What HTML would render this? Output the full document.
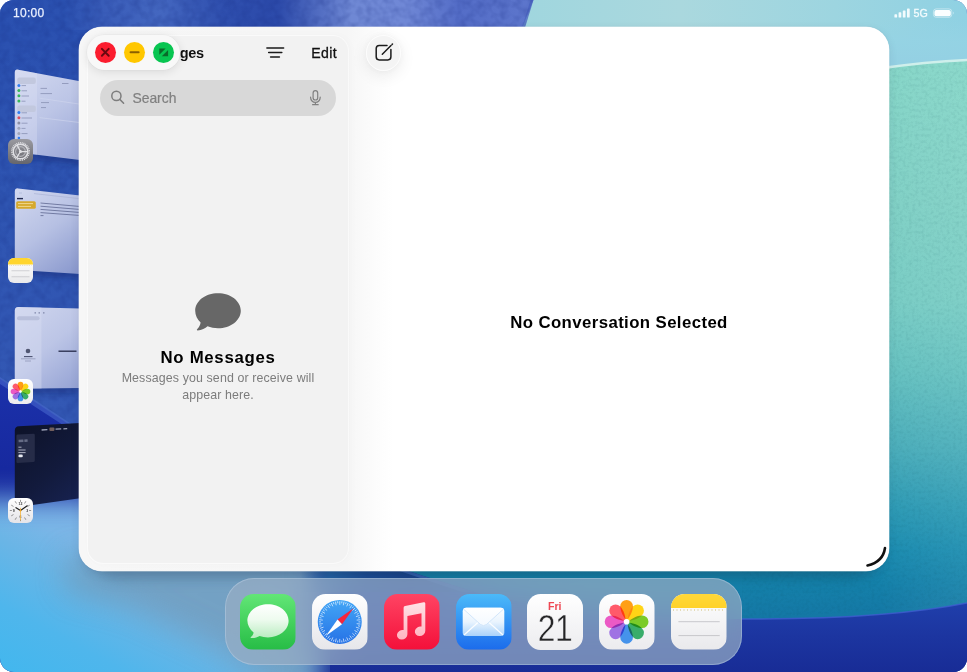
<!DOCTYPE html>
<html lang="en">
<head>
<meta charset="utf-8">
<title>Messages</title>
<style>
html,body{margin:0;padding:0;background:#fff;}
body{width:967px;height:672px;overflow:hidden;position:relative;font-family:"Liberation Sans",sans-serif;}
#screen{position:absolute;left:0;top:0;width:967px;height:672px;border-radius:14px;overflow:hidden;background:transparent;}
#wall{position:absolute;left:0;top:0;width:967px;height:672px;display:block;}
.abs{position:absolute;}
/* status bar */
#time{will-change:transform;position:absolute;left:13.3px;top:6px;font-size:12px;line-height:14px;color:#eaf0ff;-webkit-text-stroke:0.25px #eaf0ff;letter-spacing:0.3px;}
#status{position:absolute;left:890px;top:4px;width:70px;height:18px;}
/* window */
#win{position:absolute;left:79px;top:26.6px;width:810px;height:544.2px;border-radius:23px;background:#fff;
 box-shadow:0 0 0 0.5px rgba(255,255,255,.6), 0 3px 10px rgba(40,40,70,.10), 0 0 2px rgba(40,40,70,.10);}
#winshadow{position:absolute;left:92px;top:526px;width:786px;height:52px;border-radius:26px;background:rgba(5,30,55,.22);filter:blur(7px);}
#winclip{position:absolute;inset:0;will-change:transform;border-radius:23px;overflow:hidden;
 background:linear-gradient(90deg,#f7f7f7 0,#f6f6f6 200px,#f6f6f6 269px,#f7f7f7 272px,#f9f9f9 282px,#fcfcfc 296px,#fff 314px);}
#side{position:absolute;left:8.8px;top:9.2px;width:260.2px;height:527px;border-radius:15px;background:#f2f2f2;
 box-shadow:0 0 0 1px rgba(255,255,255,.5), 2px 0 10px rgba(0,0,0,.025);}
#lights{position:absolute;left:8px;top:8px;width:93px;height:35px;border-radius:18px;background:#f8f8f8;
 box-shadow:0 2px 10px rgba(0,0,0,.10),0 0 0 0.5px rgba(0,0,0,.03);}
.tl{position:absolute;top:7px;width:21px;height:21px;border-radius:50%;}
#title{clip-path:inset(-2px -2px -4px 43.2px);position:absolute;left:58.1px;top:17px;font-weight:bold;font-size:14.5px;line-height:18px;color:#111;letter-spacing:-0.35px;}
#edit{position:absolute;left:232.3px;top:17.3px;letter-spacing:0.4px;font-size:14.1px;line-height:18px;color:#111;-webkit-text-stroke:0.3px #111;}
#search{position:absolute;left:21px;top:53px;width:236px;height:35.8px;border-radius:18px;background:#d8d8d8;}
#search span{position:absolute;left:32.4px;top:8.5px;font-size:13.9px;line-height:18px;color:#808080;-webkit-text-stroke:0.2px #808080;}
#nomsg{position:absolute;left:9px;top:321px;width:260px;text-align:center;font-weight:bold;font-size:16.8px;line-height:20px;color:#000;letter-spacing:0.7px;}
#sub{position:absolute;left:9px;top:343.4px;width:260px;text-align:center;font-size:12.4px;line-height:16.2px;color:#7c7c7c;letter-spacing:0.12px;}
#nosel{position:absolute;left:270px;width:540px;top:285.7px;text-align:center;font-weight:bold;font-size:16.8px;line-height:20px;color:#000;letter-spacing:0.4px;}
#compose{position:absolute;left:286.6px;top:8.3px;width:35.6px;height:35.6px;border-radius:50%;background:#f4f4f4;
 box-shadow:inset 0 0 0 1px rgba(255,255,255,.75),0 5px 16px rgba(0,0,0,.08),0 0 6px rgba(0,0,0,.03);}
/* dock */
#dock{position:absolute;left:224.5px;top:578px;width:517.5px;height:87px;border-radius:29px;
 background:rgba(153,174,197,.70);-webkit-backdrop-filter:blur(18px);backdrop-filter:blur(18px);box-shadow:inset 0 0 0 1px rgba(200,220,240,.35);}
.ic{will-change:transform;position:absolute;top:593.5px;width:55.5px;height:55.5px;border-radius:13.5px;overflow:hidden;}
.ic svg{display:block;width:100%;height:100%;}
</style>
</head>
<body>
<div id="screen">
<!--WALL-->
<svg id="wall" width="967" height="672" viewBox="0 0 967 672">
 <defs>
  <linearGradient id="gTopBlue" x1="0" y1="0" x2="533" y2="0" gradientUnits="userSpaceOnUse">
   <stop offset="0" stop-color="#2a50b0"/>
   <stop offset="0.12" stop-color="#2c52b1"/>
   <stop offset="0.20" stop-color="#3a5db9"/>
   <stop offset="0.30" stop-color="#4467c0"/>
   <stop offset="0.42" stop-color="#2f4fae"/>
   <stop offset="0.52" stop-color="#2c4aaa"/>
   <stop offset="0.66" stop-color="#6f88d4"/>
   <stop offset="0.76" stop-color="#7088d6"/>
   <stop offset="0.86" stop-color="#546dc7"/>
   <stop offset="1" stop-color="#5d76cc"/>
  </linearGradient>
  <linearGradient id="gTopCyan" x1="525" y1="0" x2="967" y2="0" gradientUnits="userSpaceOnUse">
   <stop offset="0" stop-color="#a0d6de"/>
   <stop offset="0.35" stop-color="#aad8de"/>
   <stop offset="0.7" stop-color="#9dd5e0"/>
   <stop offset="1" stop-color="#8fd1e3"/>
  </linearGradient>
  <linearGradient id="gLeft" x1="0" y1="0" x2="0" y2="672" gradientUnits="userSpaceOnUse">
   <stop offset="0" stop-color="#2a50b0"/>
   <stop offset="0.3" stop-color="#2f55b2"/>
   <stop offset="0.62" stop-color="#3358b4"/>
   <stop offset="1" stop-color="#3358b4"/>
  </linearGradient>
  <linearGradient id="gSheet" x1="0" y1="380" x2="0" y2="672" gradientUnits="userSpaceOnUse">
   <stop offset="0" stop-color="#1b31aa"/>
   <stop offset="0.3" stop-color="#17299f"/>
   <stop offset="0.6" stop-color="#1b31a2"/>
   <stop offset="1" stop-color="#182c96"/>
  </linearGradient>
  <!-- diagonal light gradient: axis from (0,672) direction (0.48,-0.88) -->
  <linearGradient id="gLight" x1="0" y1="672" x2="120" y2="452" gradientUnits="userSpaceOnUse">
   <stop offset="0" stop-color="#42b7ee"/>
   <stop offset="0.24" stop-color="#4fb6ec"/>
   <stop offset="0.46" stop-color="#69b5e6"/>
   <stop offset="0.6" stop-color="#7ab6e7"/>
   <stop offset="0.8" stop-color="#82b6e6"/>
   <stop offset="1" stop-color="#84b4e2"/>
  </linearGradient>
  <filter id="bl16" x="-30%" y="-50%" width="160%" height="200%"><feGaussianBlur stdDeviation="15"/></filter>
  <filter id="noiseD" x="0" y="0" width="100%" height="100%" color-interpolation-filters="sRGB">
   <feTurbulence type="fractalNoise" baseFrequency="0.12" numOctaves="2" seed="7"/>
   <feColorMatrix type="matrix" values="0 0 0 0 0.08  0 0 0 0 0.16  0 0 0 0 0.5  1.5 0 0 0 -0.55"/>
   <feComposite operator="in" in2="SourceAlpha"/>
  </filter>
  <filter id="noiseT" x="0" y="0" width="100%" height="100%" color-interpolation-filters="sRGB">
   <feTurbulence type="fractalNoise" baseFrequency="0.32" numOctaves="2" seed="11"/>
   <feColorMatrix type="matrix" values="0 0 0 0 0.02  0 0 0 0 0.25  0 0 0 0 0.3  2.0 0 0 0 -0.86"/>
   <feComposite operator="in" in2="SourceAlpha"/>
  </filter>
  <filter id="bl14" x="-20%" y="-20%" width="140%" height="140%"><feGaussianBlur stdDeviation="14"/></filter>
  <mask id="mLight" maskUnits="userSpaceOnUse" x="0" y="0" width="967" height="672">
   <rect x="-80" y="499" width="395" height="260" fill="#fff" filter="url(#bl14)"/>
  </mask>
  <linearGradient id="gTeal" x1="0" y1="62" x2="0" y2="622" gradientUnits="userSpaceOnUse">
   <stop offset="0" stop-color="#86d6c8"/>
   <stop offset="0.25" stop-color="#80d0c5"/>
   <stop offset="0.43" stop-color="#78ccc4"/>
   <stop offset="0.55" stop-color="#66c1c0"/>
   <stop offset="0.69" stop-color="#4aadba"/>
   <stop offset="0.8" stop-color="#2c99b4"/>
   <stop offset="0.87" stop-color="#1b8cb0"/>
   <stop offset="0.93" stop-color="#1581aa"/>
   <stop offset="1" stop-color="#1476a4"/>
  </linearGradient>
  <linearGradient id="gTealH" x1="880" y1="0" x2="967" y2="0" gradientUnits="userSpaceOnUse">
   <stop offset="0" stop-color="#ffffff" stop-opacity="0"/>
   <stop offset="1" stop-color="#d8fff0" stop-opacity="0.07"/>
  </linearGradient>
  <linearGradient id="gSky" x1="0" y1="20" x2="0" y2="64" gradientUnits="userSpaceOnUse">
   <stop offset="0" stop-color="#95d3e4" stop-opacity="0"/>
   <stop offset="0.5" stop-color="#95d3e4" stop-opacity="0.8"/>
   <stop offset="1" stop-color="#94d0e3" stop-opacity="1"/>
  </linearGradient>
  <linearGradient id="gWedge" x1="300" y1="0" x2="410" y2="0" gradientUnits="userSpaceOnUse">
   <stop offset="0" stop-color="#2a6cae" stop-opacity="0"/>
   <stop offset="0.28" stop-color="#2566aa" stop-opacity="1"/>
   <stop offset="0.6" stop-color="#1d4f9a" stop-opacity="1"/>
   <stop offset="1" stop-color="#1b4690" stop-opacity="1"/>
  </linearGradient>
  <linearGradient id="gNavy" x1="0" y1="600" x2="0" y2="672" gradientUnits="userSpaceOnUse">
   <stop offset="0" stop-color="#2040ac"/>
   <stop offset="0.5" stop-color="#1c35a0"/>
   <stop offset="1" stop-color="#182c96"/>
  </linearGradient>
 </defs>
 <!-- base blue -->
 <rect x="0" y="0" width="967" height="672" fill="url(#gLeft)"/>
 <rect x="0" y="0" width="540" height="30" fill="url(#gTopBlue)"/>
 <!-- top cyan -->
 <polygon points="533.5,0 967,0 967,70 505,70 " fill="url(#gTopCyan)"/>
 <polygon points="530.5,0 533.5,0 512,70 509,70" fill="#4a63c0" opacity=".75"/>
 <path d="M0,0 L533,0 L524,30 L90,30 L90,470 L0,470 Z" filter="url(#noiseD)" opacity=".32"/>
 <!-- navy sheet lower-left and bottom -->
 <polygon points="0,379 120,458 120,555 967,555 967,672 0,672" fill="url(#gSheet)"/>
 <polygon points="0,377 120,456 120,462 0,384" fill="#4a6cd0" opacity=".55"/>
 <!-- light glow bottom-left -->
 <rect x="0" y="440" width="420" height="232" fill="url(#gLight)" mask="url(#mLight)"/>
 <g mask="url(#mLight)"><polygon points="66,556 345,556 345,690 280,690 215,645 130,606 66,590" fill="#6f96b2" opacity=".66" filter="url(#bl16)"/></g>
 <!-- teal right -->
 <path d="M358,555 L436,580 L967,580 L967,60 Q925,62 880,68.4 L880,555 Z" fill="url(#gTeal)"/>
 <path d="M417,574 L474,592 Q610,626 742,619 Q885,619.5 967,603 L967,572 Z" fill="url(#gTeal)"/>
 <path d="M880,68.4 Q925,62 967,60 L967,610 L880,610 Z" fill="url(#gTealH)"/>
 <path d="M880,68.4 Q925,62 967,60 L967,603 Q860,612 742,619 L742,570 L880,570 Z" filter="url(#noiseT)" opacity=".09"/>
 <polygon points="296,555 358,555 474,592 296,592" fill="url(#gWedge)"/>
 <polygon points="352,555 358,555 474,592 462,592" fill="#3f6fc0" opacity=".7"/>
 <path d="M474,592 Q610,626 742,619 Q885,619.5 967,603 L967,672 L330,672 L330,592 Z" fill="url(#gNavy)"/>
 <path d="M742,619 Q885,619.5 967,603" fill="none" stroke="#3f5fd0" stroke-width="1.6" opacity=".8"/>
 <!-- upper right light blue sky -->
 <path d="M880,20 L967,20 L967,60 Q925,62 880,68.4 Z" fill="url(#gSky)"/>
 <path d="M880,68.4 Q925,62 967,60" fill="none" stroke="#d2f0ec" stroke-width="2.6" opacity=".95"/>
</svg>
<!--/WALL-->
<!--STAGE-->
<svg class="abs" style="left:0;top:0;filter:blur(.35px)" width="100" height="672" viewBox="0 0 100 672">
 <defs>
  <linearGradient id="th1" x1="15" y1="69" x2="79" y2="160" gradientUnits="userSpaceOnUse">
   <stop offset="0" stop-color="#d3d9f0"/><stop offset="0.5" stop-color="#bcc5e6"/><stop offset="1" stop-color="#98a5d6"/>
  </linearGradient>
  <linearGradient id="th2" x1="15" y1="188" x2="79" y2="274" gradientUnits="userSpaceOnUse">
   <stop offset="0" stop-color="#d3d9f0"/><stop offset="0.5" stop-color="#b6c0e3"/><stop offset="1" stop-color="#8796cc"/>
  </linearGradient>
  <linearGradient id="th3" x1="15" y1="307" x2="79" y2="388" gradientUnits="userSpaceOnUse">
   <stop offset="0" stop-color="#d0d6ee"/><stop offset="0.5" stop-color="#bcc5e6"/><stop offset="1" stop-color="#94a2d4"/>
  </linearGradient>
  <linearGradient id="th4" x1="15" y1="426" x2="79" y2="500" gradientUnits="userSpaceOnUse">
   <stop offset="0" stop-color="#0d1228"/><stop offset="0.6" stop-color="#121a3c"/><stop offset="1" stop-color="#172250"/>
  </linearGradient>
  <filter id="thsh" x="-20%" y="-20%" width="140%" height="150%"><feGaussianBlur stdDeviation="3"/></filter>
 </defs>
 <!-- shadows -->
 <g fill="#0a1a60" opacity=".35" filter="url(#thsh)">
  <path d="M17,75 L80,86 L80,165 L17,158 Z"/>
  <path d="M17,194 L80,200 L80,279 L17,275 Z"/>
  <path d="M17,313 L80,314 L80,393 L17,394 Z"/>
 </g>
 <!-- thumb 1 : Settings -->
 <path d="M18.3,69.7 L80,81.2 L80,160.1 L18.3,152.4 Q14.8,152 14.8,148.5 L14.8,72.5 Q14.8,69 18.3,69.7 Z" fill="url(#th1)"/>
 <path d="M18.3,69.7 L37,73.2 L37,154.7 L18.3,152.4 Q14.8,152 14.8,148.5 L14.8,72.5 Q14.8,69 18.3,69.7 Z" fill="#dfe4f5" opacity=".32"/>
 <g>
  <rect x="17.3" y="77.5" width="18.5" height="6.5" rx="2" fill="#c2c8de"/>
  <rect x="17.3" y="105.5" width="18.5" height="6.5" rx="2" fill="#c2c8de"/>
  <circle cx="18.9" cy="85.4" r="1.5" fill="#2f7cf0"/><circle cx="18.9" cy="90.6" r="1.5" fill="#36b85a"/>
  <circle cx="18.9" cy="95.8" r="1.5" fill="#36b85a"/><circle cx="18.9" cy="101" r="1.5" fill="#36b85a"/>
  <circle cx="18.9" cy="112.6" r="1.5" fill="#2f7cf0"/><circle cx="18.9" cy="117.8" r="1.5" fill="#e05060"/>
  <circle cx="18.9" cy="123" r="1.5" fill="#8a8fa5"/><circle cx="18.9" cy="128.2" r="1.5" fill="#a0a6bb"/>
  <circle cx="18.9" cy="133.4" r="1.5" fill="#a0a6bb"/><circle cx="18.9" cy="138" r="1.3" fill="#2f7cf0"/>
  <g stroke="#8189ad" stroke-width="1" opacity=".7">
   <path d="M21.5,85.6 H26 M21.5,90.8 H27 M21.5,96 H29 M21.5,101.2 H25.5 M21.5,112.8 H27 M21.5,118 H32 M21.5,123.2 H27.5 M21.5,128.4 H25.5 M21.5,133.6 H27.5"/>
   <path d="M40.5,88.4 H47 M40.5,93.6 H52 M41,102.6 H49 M41,107.6 H46 M62,83.5 H68.5"/>
  </g>
  <path d="M39.5,98.2 L80,104.2 M39.5,117.6 L80,122.6" stroke="#cfd6ee" stroke-width=".8" opacity=".8"/>
 </g>
 <!-- thumb 2 : Notes -->
 <path d="M18.3,188.4 L80,195.6 L80,274.1 L18.3,269.9 Q14.8,269.6 14.8,266 L14.8,191.5 Q14.8,188 18.3,188.4 Z" fill="url(#th2)"/>
 <rect x="16.2" y="201.2" width="19.6" height="7.6" rx="1.6" fill="#d6a92c"/>
 <g stroke="#59628c" stroke-width="1" opacity=".75">
  <path d="M40.5,203 L79,206.4 M40.5,206.2 L79,209.4 M40.5,209.4 L79,212.4 M40.5,212.6 L79,215.4 M40.5,215.6 H43.5"/>
 </g>
 <path d="M17,198.6 H23" stroke="#222a50" stroke-width="1.4"/>
 <path d="M18,203.6 H33 M18,206.4 H31" stroke="#fff3c8" stroke-width=".8" opacity=".8"/>
 <path d="M19,193 H22 M34,193.6 L79,198.6" stroke="#aab3d6" stroke-width="1" opacity=".7"/>
 <!-- thumb 3 : Messages -->
 <path d="M18.3,307.1 L80,308.4 L80,387.9 L18.3,388.8 Q14.8,388.9 14.8,385.3 L14.8,310.6 Q14.8,307 18.3,307.1 Z" fill="url(#th3)"/>
 <path d="M18.3,307.1 L41.5,307.6 L41.5,388.5 L18.3,388.8 Q14.8,388.9 14.8,385.3 L14.8,310.6 Q14.8,307 18.3,307.1 Z" fill="#d9def2" opacity=".4"/>
 <rect x="17" y="316.2" width="22.6" height="4" rx="2" fill="#b9c0dc"/>
 <circle cx="28" cy="351" r="2.3" fill="#505672"/>
 <path d="M24,356.6 H32.5" stroke="#4a5070" stroke-width="1.1"/>
 <path d="M21,358.8 H35.5 M25,361 H31" stroke="#8f97b8" stroke-width=".8"/>
 <path d="M58.5,351.2 H76.5" stroke="#252a48" stroke-width="1.3"/>
 <path d="M34.5,312.8 H36 M38.5,312.8 H40 M43,312.8 H44.5" stroke="#8088aa" stroke-width="1.2"/>
 <!-- thumb 4 : Clock -->
 <path d="M19,426.2 L80,422.9 L80,498.3 L18.3,507 Q14.8,507.5 14.8,504 L14.8,430.4 Q14.8,426.4 19,426.2 Z" fill="url(#th4)"/>
 <path d="M17.6,434.6 L33.6,433.8 Q34.8,433.8 34.8,435 L34.8,460.6 Q34.8,461.8 33.6,461.9 L17.6,463 Q16.4,463 16.4,461.8 L16.4,435.8 Q16.4,434.6 17.6,434.6 Z" fill="#262c48"/>
 <path d="M18.6,441 L23.4,440.7 M24.4,440.7 L27.6,440.5" stroke="#9aa0b8" stroke-width="2.6" opacity=".55"/>
 <path d="M18.4,447.2 H21.5 M18.4,450 H25.6 M18.4,452.6 H25.6" stroke="#d5d8e6" stroke-width=".9" opacity=".85"/>
 <rect x="18.4" y="454.6" width="4.4" height="2.6" rx="1.3" fill="#e8eaf2"/>
 <path d="M41.6,430 L47.4,429.7 M55.6,429.2 L61.2,428.9 M63.4,428.8 L67.2,428.6" stroke="#b6bbd0" stroke-width="1.3" opacity=".85"/>
 <rect x="49.4" y="427.4" width="5" height="3.6" rx="1" fill="#8a7068" opacity=".8"/>
</svg>
<!-- app icons for stage manager -->
<svg class="abs" style="left:8.4px;top:138.5px" width="25" height="25" viewBox="0 0 50 50">
 <defs><linearGradient id="sg1" x1="0" y1="0" x2="0" y2="1"><stop offset="0" stop-color="#9a9aa0"/><stop offset="1" stop-color="#66666c"/></linearGradient></defs>
 <rect width="50" height="50" rx="12" fill="url(#sg1)"/>
 <circle cx="25" cy="25" r="17.4" fill="none" stroke="#e2e2e6" stroke-width="3" stroke-dasharray="2.0 1.644"/>
 <circle cx="25" cy="25" r="14.6" fill="none" stroke="#e0e0e4" stroke-width="3"/>
 <circle cx="25" cy="25" r="9.8" fill="none" stroke="#b4b4ba" stroke-width="2.2"/>
 <circle cx="25" cy="25" r="3" fill="#e0e0e4"/>
 <g stroke="#e0e0e4" stroke-width="2.5" stroke-linecap="round" transform="rotate(-28 25 25)"><path d="M25,25 L25,11.200 M25,25 L37,31.900 M25,25 L13,31.900"/></g>
</svg>
<svg class="abs" style="left:8.4px;top:257.6px" width="25" height="25" viewBox="0 0 50 50">
 <defs><linearGradient id="sg2" x1="0" y1="0" x2="0" y2="1"><stop offset="0" stop-color="#ffffff"/><stop offset="1" stop-color="#e9e9eb"/></linearGradient>
 <clipPath id="sc2"><rect width="50" height="50" rx="12"/></clipPath></defs>
 <g clip-path="url(#sc2)"><rect width="50" height="50" fill="url(#sg2)"/><rect width="50" height="13" fill="#ffd52e"/>
 <path d="M3,15 H47" stroke="#c8b470" stroke-width="1" stroke-dasharray="1.4 2.2"/>
 <path d="M7,25.5 H43 M7,37.5 H43" stroke="#bdbdc0" stroke-width="1.3"/></g>
</svg>
<svg class="abs" style="left:8.4px;top:378.5px" width="25" height="25" viewBox="0 0 50 50">
 <defs><linearGradient id="sg3" x1="0" y1="0" x2="0" y2="1"><stop offset="0" stop-color="#ffffff"/><stop offset="1" stop-color="#ececee"/></linearGradient></defs>
 <rect width="50" height="50" rx="12" fill="url(#sg3)"/>
 <g transform="translate(25 25) scale(.9)" opacity=".95" style="isolation:isolate">
  <path d="M0,-1.5 C-2.600,-4 -6.300,-10 -6.300,-15.600 A6.300,6.300 0 0 1 6.300,-15.600 C6.300,-10 2.600,-4 0,-1.500 Z" fill="#ff9a0a" transform="rotate(0)" style="mix-blend-mode:multiply"/>
  <path d="M0,-1.5 C-2.600,-4 -6.300,-10 -6.300,-15.600 A6.300,6.300 0 0 1 6.300,-15.600 C6.300,-10 2.600,-4 0,-1.500 Z" fill="#ffd20a" transform="rotate(45)" style="mix-blend-mode:multiply"/>
  <path d="M0,-1.5 C-2.600,-4 -6.300,-10 -6.300,-15.600 A6.300,6.300 0 0 1 6.300,-15.600 C6.300,-10 2.600,-4 0,-1.500 Z" fill="#74c91e" transform="rotate(90)" style="mix-blend-mode:multiply"/>
  <path d="M0,-1.5 C-2.600,-4 -6.300,-10 -6.300,-15.600 A6.300,6.300 0 0 1 6.300,-15.600 C6.300,-10 2.600,-4 0,-1.500 Z" fill="#2fa964" transform="rotate(135)" style="mix-blend-mode:multiply"/>
  <path d="M0,-1.5 C-2.600,-4 -6.300,-10 -6.300,-15.600 A6.300,6.300 0 0 1 6.300,-15.600 C6.300,-10 2.600,-4 0,-1.500 Z" fill="#3b8eea" transform="rotate(180)" style="mix-blend-mode:multiply"/>
  <path d="M0,-1.5 C-2.600,-4 -6.300,-10 -6.300,-15.600 A6.300,6.300 0 0 1 6.300,-15.600 C6.300,-10 2.600,-4 0,-1.500 Z" fill="#9a6be2" transform="rotate(225)" style="mix-blend-mode:multiply"/>
  <path d="M0,-1.5 C-2.600,-4 -6.300,-10 -6.300,-15.600 A6.300,6.300 0 0 1 6.300,-15.600 C6.300,-10 2.600,-4 0,-1.500 Z" fill="#ea52c2" transform="rotate(270)" style="mix-blend-mode:multiply"/>
  <path d="M0,-1.5 C-2.600,-4 -6.300,-10 -6.300,-15.600 A6.300,6.300 0 0 1 6.300,-15.600 C6.300,-10 2.600,-4 0,-1.500 Z" fill="#ff5262" transform="rotate(315)" style="mix-blend-mode:multiply"/>
  <circle r="2.600" fill="#fff"/>
 </g>
</svg>
<svg class="abs" style="left:8.4px;top:498.4px" width="25" height="25" viewBox="0 0 50 50">
 <defs><linearGradient id="sg4" x1="0" y1="0" x2="0" y2="1"><stop offset="0" stop-color="#ffffff"/><stop offset="1" stop-color="#e4e4e8"/></linearGradient></defs>
 <rect width="50" height="50" rx="12" fill="url(#sg4)"/>
 <g stroke="#444" stroke-width="1.1" stroke-linecap="round">
  <path d="M25,4.500 V7 M25,43 V45.500 M4.500,25 H7 M43,25 H45.500 M14.700,7.200 L16.500,10.300 M35.300,7.200 L33.500,10.300 M7.200,14.700 L10.300,16.500 M42.800,14.700 L39.700,16.500 M7.200,35.300 L10.300,33.500 M42.800,35.300 L39.700,33.500 M14.700,42.800 L16.500,39.700 M35.300,42.800 L33.500,39.700"/>
 </g>
 <g font-family="Liberation Sans, sans-serif" font-size="7" font-weight="bold" fill="#3a3a3a" text-anchor="middle">
  <text x="25" y="14.500">12</text><text x="38.500" y="27.500">3</text><text x="25" y="40.500">6</text><text x="11.500" y="27.500">9</text>
 </g>
 <path d="M25,25 L16,19.300 M25,25 L38.500,15.500" stroke="#1a1a1a" stroke-width="2.3" stroke-linecap="round"/>
 <path d="M25,20.500 V44" stroke="#f3b744" stroke-width="1.7" stroke-linecap="round"/>
 <circle cx="25" cy="25" r="2" fill="#f0a828"/>
</svg>
<!--/STAGE-->
<div id="time">10:00</div>
<!--STATUS-->
<svg class="abs" style="left:880px;top:0" width="87" height="30" viewBox="880 0 87 30">
 <g fill="#f2fbfd">
  <rect x="894.4" y="14.2" width="2.7" height="3.4" rx=".7"/>
  <rect x="898.6" y="12.3" width="2.7" height="5.3" rx=".7"/>
  <rect x="902.8" y="10.4" width="2.7" height="7.2" rx=".7"/>
  <rect x="907" y="8.4" width="2.7" height="9.2" rx=".7"/>
 </g>
 <text x="913.5" y="16.7" font-family="Liberation Sans, sans-serif" font-size="10.7" fill="#f2fbfd" stroke="#f2fbfd" stroke-width=".3">5G</text>
 <rect x="933.4" y="8.9" width="18.4" height="8.4" rx="2.8" fill="none" stroke="#f2fbfd" stroke-opacity=".55" stroke-width=".9"/>
 <rect x="934.4" y="9.9" width="16.4" height="6.4" rx="2" fill="#fbfeff"/>
 <path d="M953,11.6 Q954.6,13.1 953,14.6 Z" fill="#f2fbfd" opacity=".6"/>
</svg>
<!--/STATUS-->
<div id="winshadow"></div>
<div id="win">
 <div id="winclip">
  <div id="side"></div>
  <div id="title">Messages</div>
  <div id="lights">
   <div class="tl" style="left:8px;background:#fb1d2f"></div>
   <div class="tl" style="left:37.2px;background:#ffc700"></div>
   <div class="tl" style="left:66.3px;background:#08c551"></div>
  </div>
  <div id="edit">Edit</div>
  <div id="search"><span>Search</span></div>
  <div id="nomsg">No Messages</div>
  <div id="sub">Messages you send or receive will<br>appear here.</div>
  <div id="nosel">No Conversation Selected</div>
  <div id="compose"></div>
  <!--WINICONS-->
  <svg class="abs" style="left:0;top:0.4px" width="810" height="543" viewBox="79 27 810 543" fill="none">
   <!-- traffic light glyphs -->
   <g stroke="#6a0810" stroke-width="2" stroke-linecap="round"><path d="M101.9,48.9 L108.7,55.7 M108.7,48.9 L101.9,55.7"/></g>
   <path d="M130.6,52.3 H138.6" stroke="#8a6000" stroke-width="2.1" stroke-linecap="round"/>
   <path d="M159.3,48.4 H165.6 L159.3,54.7 Z M168.1,56.2 H161.8 L168.1,49.9 Z" fill="#0a6a2a"/>
   <!-- filter icon -->
   <g stroke="#1a1a1a" stroke-width="1.55" stroke-linecap="round">
    <path d="M266.9,47.9 H283.6 M268.7,52.5 H281.8 M270.6,57 H279.4"/>
   </g>
   <!-- search magnifier -->
   <g stroke="#7d7d7d" stroke-width="1.5" stroke-linecap="round">
    <circle cx="116.4" cy="95.9" r="4.6"/>
    <path d="M119.8,99.4 L123.6,103.2"/>
   </g>
   <!-- mic -->
   <g stroke="#808080" stroke-width="1.2" stroke-linecap="round">
    <rect x="313.1" y="90.6" width="4.6" height="9.4" rx="2.3"/>
    <path d="M310.6,97.2 V97.6 A4.8,4.8 0 0 0 320.2,97.6 V97.2 M315.4,102.4 V104.6 M312.6,104.7 H318.2"/>
   </g>
   <!-- compose icon -->
   <g stroke="#1c1c1c" stroke-width="1.5" stroke-linecap="round" stroke-linejoin="round">
    <path d="M387,45.500 H379.300 A3.100,3.100 0 0 0 376.200,48.600 V56.800 A3.100,3.100 0 0 0 379.300,59.900 H387.800 A3.100,3.100 0 0 0 390.900,56.800 V49.500"/>
    <path d="M382.300,54.200 L391,45.500 M392.100,44.400 L392.500,44"/>
   </g>
   <!-- bubble -->
   <path d="M218,293.2 C230.6,293.2 240.8,301 240.8,310.7 C240.8,320.4 230.6,328.2 218,328.2 C214.2,328.2 210.7,327.5 207.5,326.3 C205.5,328.3 201.6,330.2 197.6,330.4 C196.8,330.4 196.6,329.7 197.1,329.2 C199,327.4 200.4,325 200.6,322.5 C197.3,319.4 195.2,315.3 195.2,310.7 C195.2,301 205.4,293.2 218,293.2 Z" fill="#676767"/>
   <!-- resize handle -->
   <path d="M867.5,565.5 Q883,562 885,548" stroke="#111" stroke-width="2.6" stroke-linecap="round"/>
  </svg>
<!--/WINICONS-->
 </div>
</div>
<div id="dock"></div>
<!--DOCKICONS-->
<div class="ic" style="left:240.4px"><svg viewBox="0 0 55.5 55.5">
 <defs><linearGradient id="dm" x1="0" y1="0" x2="0" y2="1"><stop offset="0" stop-color="#62e676"/><stop offset="1" stop-color="#27bd46"/></linearGradient>
 <linearGradient id="dmb" x1="0" y1="0" x2="0" y2="1"><stop offset="0" stop-color="#ffffff"/><stop offset="0.45" stop-color="#eefbef"/><stop offset="1" stop-color="#b9ecc0"/></linearGradient></defs>
 <rect width="55.5" height="55.5" fill="url(#dm)"/>
 <path d="M28,10.2 C39.4,10.2 48.6,17.6 48.6,26.8 C48.6,36 39.4,43.4 28,43.400 C25,43.4 22.200,42.900 19.600,42 C17.600,43.300 14.300,44.200 11.300,44 C10.600,44 10.400,43.400 10.900,43 C12.500,41.600 13.400,40 13.600,38.400 C9.800,35.400 7.400,31.300 7.400,26.800 C7.400,17.600 16.600,10.200 28,10.200 Z" fill="url(#dmb)"/>
</svg></div>
<div class="ic" style="left:312.4px"><svg viewBox="0 0 55.5 55.5">
 <defs><linearGradient id="ds" x1="0" y1="0" x2="0" y2="1"><stop offset="0" stop-color="#ffffff"/><stop offset="1" stop-color="#e6e6ea"/></linearGradient>
 <linearGradient id="dsb" x1="0" y1="0" x2="0" y2="1"><stop offset="0" stop-color="#43a6f6"/><stop offset="1" stop-color="#2672e6"/></linearGradient></defs>
 <rect width="55.5" height="55.5" fill="url(#ds)"/>
 <circle cx="27.75" cy="27.9" r="22" fill="url(#dsb)"/>
 <path d="M27.75,10.90 L27.75,7.20 M29.70,9.30 L29.91,7.31 M31.28,11.27 L32.05,7.65 M33.53,10.12 L34.15,8.21 M34.66,12.37 L36.17,8.99 M37.10,11.71 L38.10,9.97 M37.74,14.15 L39.92,11.15 M40.26,14.00 L41.60,12.52 M40.38,16.52 L43.13,14.05 M42.88,16.91 L44.50,15.73 M42.47,19.40 L45.68,17.55 M44.83,20.29 L46.66,19.48 M43.92,22.65 L47.44,21.50 M46.04,24.01 L48.00,23.60 M44.66,26.12 L48.34,25.74 M46.45,27.90 L48.45,27.90 M44.66,29.68 L48.34,30.06 M46.04,31.79 L48.00,32.20 M43.92,33.15 L47.44,34.30 M44.83,35.51 L46.66,36.32 M42.47,36.40 L45.68,38.25 M42.88,38.89 L44.50,40.07 M40.38,39.28 L43.13,41.75 M40.26,41.80 L41.60,43.28 M37.74,41.65 L39.92,44.65 M37.10,44.09 L38.10,45.83 M34.66,43.43 L36.17,46.81 M33.53,45.68 L34.15,47.59 M31.28,44.53 L32.05,48.15 M29.70,46.50 L29.91,48.49 M27.75,44.90 L27.75,48.60 M25.80,46.50 L25.59,48.49 M24.22,44.53 L23.45,48.15 M21.97,45.68 L21.35,47.59 M20.84,43.43 L19.33,46.81 M18.40,44.09 L17.40,45.83 M17.76,41.65 L15.58,44.65 M15.24,41.80 L13.90,43.28 M15.12,39.28 L12.37,41.75 M12.62,38.89 L11.00,40.07 M13.03,36.40 L9.82,38.25 M10.67,35.51 L8.84,36.32 M11.58,33.15 L8.06,34.30 M9.46,31.79 L7.50,32.20 M10.84,29.68 L7.16,30.06 M9.05,27.90 L7.05,27.90 M10.84,26.12 L7.16,25.74 M9.46,24.01 L7.50,23.60 M11.58,22.65 L8.06,21.50 M10.67,20.29 L8.84,19.48 M13.03,19.40 L9.82,17.55 M12.62,16.91 L11.00,15.73 M15.12,16.52 L12.37,14.05 M15.24,14.00 L13.90,12.52 M17.76,14.15 L15.58,11.15 M18.40,11.71 L17.40,9.97 M20.84,12.37 L19.33,8.99 M21.97,10.12 L21.35,8.21 M24.22,11.27 L23.45,7.65 M25.80,9.30 L25.59,7.31" stroke="#eef6ff" stroke-width=".8" opacity=".9"/>
 <path d="M41.5,14.2 L25.5,25.6 L30,30.2 Z" fill="#f6253c"/>
 <path d="M14,41.700 L25.500,25.600 L30,30.200 Z" fill="#ffffff"/>
</svg></div>
<div class="ic" style="left:384.0px"><svg viewBox="0 0 55.5 55.5">
 <defs><linearGradient id="du" x1="0" y1="0" x2="0" y2="1"><stop offset="0" stop-color="#ff4463"/><stop offset="1" stop-color="#f4103a"/></linearGradient>
 <linearGradient id="dun" x1="0" y1="0" x2="0" y2="1"><stop offset="0" stop-color="#ffe1e6"/><stop offset="1" stop-color="#ffb4c0"/></linearGradient></defs>
 <rect width="55.5" height="55.500" fill="url(#du)"/>
 <path d="M41.300,8.200 L41.300,36.800 A5.300,4.700 -20 1 1 37.500,32.600 L37.500,19.300 L23.400,22 L23.400,40.300 A5.300,4.700 -20 1 1 19.600,36.100 L19.600,13.800 Q19.600,12.300 21.100,12 L39.600,8.200 Q41.300,7.900 41.300,9.400 Z" fill="url(#dun)"/>
</svg></div>
<div class="ic" style="left:455.9px"><svg viewBox="0 0 55.5 55.5">
 <defs><linearGradient id="dl" x1="0" y1="0" x2="0" y2="1"><stop offset="0" stop-color="#4bbaf9"/><stop offset="1" stop-color="#1c6cec"/></linearGradient>
 <linearGradient id="dle" x1="0" y1="0" x2="0" y2="1"><stop offset="0" stop-color="#ffffff"/><stop offset="0.5" stop-color="#e9f4fe"/><stop offset="1" stop-color="#a9d2fa"/></linearGradient>
 <linearGradient id="dlf" x1="0" y1="0" x2="0" y2="1"><stop offset="0" stop-color="#ffffff"/><stop offset="1" stop-color="#f3f9ff"/></linearGradient></defs>
 <rect width="55.5" height="55.5" fill="url(#dl)"/>
 <rect x="6.700" y="13.700" width="41.600" height="28.400" rx="3.600" fill="url(#dle)"/>
 <path d="M8,41 L22.500,28 M47,41 L32.500,28" stroke="#ffffff" stroke-width="1.300" opacity=".9"/>
 <path d="M7.400,15 Q8.500,13.700 10.300,13.700 L44.700,13.700 Q46.500,13.700 47.600,15 L30.600,30.400 Q27.500,33 24.400,30.400 Z" fill="url(#dlf)"/>
 <path d="M7.400,15 L24.400,30.400 Q27.500,33 30.600,30.400 L47.600,15" fill="none" stroke="#c3def8" stroke-width=".8" opacity=".9"/>
</svg></div>
<div class="ic" style="left:527.4px;background:linear-gradient(#ffffff,#ececef)">
 <div style="position:absolute;left:0;width:55.5px;top:6.300px;text-align:center;font-weight:bold;font-size:10.6px;line-height:12px;color:#ee4753;">Fri</div>
 <div style="position:absolute;left:0;width:55.5px;top:15.2px;text-align:center;font-size:36.8px;line-height:40px;color:#262628;letter-spacing:-0.5px;text-indent:0.5px;transform:scale(.865,1.0);transform-origin:50% 50%;-webkit-text-stroke:0.45px #f3f3f5;">21</div>
</div>
<div class="ic" style="left:599.2px"><svg viewBox="0 0 55.5 55.5">
 <defs><linearGradient id="dp" x1="0" y1="0" x2="0" y2="1"><stop offset="0" stop-color="#ffffff"/><stop offset="1" stop-color="#ebebee"/></linearGradient></defs>
 <rect width="55.5" height="55.5" fill="url(#dp)"/>
 <g transform="translate(27.6 27.8)" opacity=".95" style="isolation:isolate">
  <path d="M0,-1.5 C-2.6,-4 -6.300,-10 -6.300,-15.600 A6.300,6.300 0 0 1 6.300,-15.600 C6.300,-10 2.600,-4 0,-1.500 Z" fill="#ff9a0a" transform="rotate(0)" style="mix-blend-mode:multiply"/>
  <path d="M0,-1.5 C-2.6,-4 -6.300,-10 -6.300,-15.600 A6.300,6.300 0 0 1 6.300,-15.600 C6.300,-10 2.600,-4 0,-1.500 Z" fill="#ffd20a" transform="rotate(45)" style="mix-blend-mode:multiply"/>
  <path d="M0,-1.5 C-2.6,-4 -6.300,-10 -6.300,-15.600 A6.300,6.300 0 0 1 6.300,-15.600 C6.300,-10 2.600,-4 0,-1.500 Z" fill="#74c91e" transform="rotate(90)" style="mix-blend-mode:multiply"/>
  <path d="M0,-1.5 C-2.6,-4 -6.300,-10 -6.300,-15.600 A6.300,6.300 0 0 1 6.300,-15.600 C6.300,-10 2.600,-4 0,-1.500 Z" fill="#2fa964" transform="rotate(135)" style="mix-blend-mode:multiply"/>
  <path d="M0,-1.5 C-2.6,-4 -6.300,-10 -6.300,-15.600 A6.300,6.300 0 0 1 6.300,-15.600 C6.300,-10 2.600,-4 0,-1.500 Z" fill="#3b8eea" transform="rotate(180)" style="mix-blend-mode:multiply"/>
  <path d="M0,-1.5 C-2.6,-4 -6.300,-10 -6.300,-15.600 A6.300,6.300 0 0 1 6.300,-15.600 C6.300,-10 2.600,-4 0,-1.500 Z" fill="#9a6be2" transform="rotate(225)" style="mix-blend-mode:multiply"/>
  <path d="M0,-1.5 C-2.6,-4 -6.300,-10 -6.300,-15.600 A6.300,6.300 0 0 1 6.300,-15.600 C6.300,-10 2.600,-4 0,-1.500 Z" fill="#ea52c2" transform="rotate(270)" style="mix-blend-mode:multiply"/>
  <path d="M0,-1.5 C-2.6,-4 -6.300,-10 -6.300,-15.600 A6.300,6.300 0 0 1 6.300,-15.600 C6.300,-10 2.600,-4 0,-1.500 Z" fill="#ff5262" transform="rotate(315)" style="mix-blend-mode:multiply"/>
 </g>
 <circle cx="27.600" cy="27.800" r="2.800" fill="#fff"/>
</svg></div>
<div class="ic" style="left:670.7px"><svg viewBox="0 0 55.5 55.5">
 <defs><linearGradient id="dn" x1="0" y1="0" x2="0" y2="1"><stop offset="0" stop-color="#ffffff"/><stop offset="1" stop-color="#e9e9ec"/></linearGradient>
 <linearGradient id="dny" x1="0" y1="0" x2="0" y2="1"><stop offset="0" stop-color="#ffd83a"/><stop offset="1" stop-color="#ffd22a"/></linearGradient></defs>
 <rect width="55.5" height="55.5" fill="url(#dn)"/>
 <rect width="55.5" height="14" fill="url(#dny)"/>
 <path d="M2,16 H54" stroke="#c9b565" stroke-width=".9" stroke-dasharray="1 2.500"/>
 <path d="M7.400,27.700 H48.700 M7.400,41.600 H48.700" stroke="#bcbcc0" stroke-width=".8"/>
</svg></div>
<!--/DOCKICONS-->
</div>
</body>
</html>
